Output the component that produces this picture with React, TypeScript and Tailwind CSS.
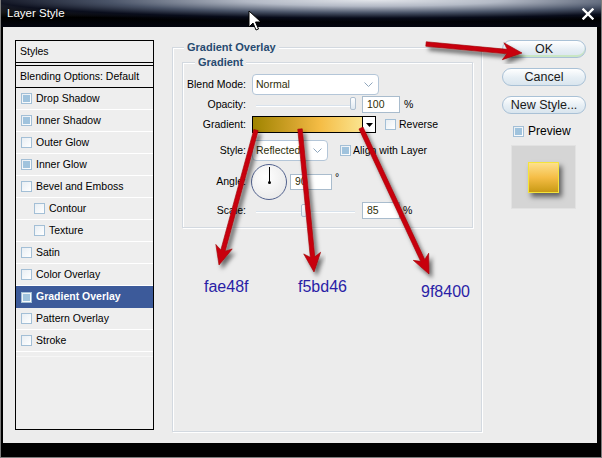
import React from "react";

type Row = { label: string; checked?: boolean; indent?: boolean; selected?: boolean };

const rows: Row[] = [
  { label: "Drop Shadow", checked: true },
  { label: "Inner Shadow", checked: true },
  { label: "Outer Glow" },
  { label: "Inner Glow", checked: true },
  { label: "Bevel and Emboss" },
  { label: "Contour", indent: true },
  { label: "Texture", indent: true },
  { label: "Satin" },
  { label: "Color Overlay" },
  { label: "Gradient Overlay", checked: true, selected: true },
  { label: "Pattern Overlay" },
  { label: "Stroke" },
];

function Check({ checked }: { checked?: boolean }) {
  return (
    <span className="w-[11px] h-[11px] border border-[#a3bfd6] bg-[linear-gradient(135deg,#e8eef3,#ffffff)] flex items-center justify-center shrink-0">
      {checked && <span className="w-[7px] h-[7px] bg-[#a0c3dd]" />}
    </span>
  );
}

function Chevron() {
  return (
    <svg width="9" height="6" viewBox="0 0 9 6">
      <polyline points="0.5,0.5 4.5,4.5 8.5,0.5" fill="none" stroke="#90a6bc" strokeWidth="1" />
    </svg>
  );
}

function arrowPts(x1: number, y1: number, x2: number, y2: number, w = 4.5, hl = 19, hw = 17) {
  const dx = x2 - x1;
  const dy = y2 - y1;
  const L = Math.hypot(dx, dy);
  const ux = dx / L;
  const uy = dy / L;
  const px = -uy;
  const py = ux;
  const bx = x2 - ux * hl;
  const by = y2 - uy * hl;
  const nx = x2 - ux * (hl - 4);
  const ny = y2 - uy * (hl - 4);
  const pts = [
    [x1 + (px * w) / 2, y1 + (py * w) / 2],
    [nx + (px * w) / 2, ny + (py * w) / 2],
    [bx + (px * hw) / 2, by + (py * hw) / 2],
    [x2, y2],
    [bx - (px * hw) / 2, by - (py * hw) / 2],
    [nx - (px * w) / 2, ny - (py * w) / 2],
    [x1 - (px * w) / 2, y1 - (py * w) / 2],
  ];
  return pts.map((p) => p.join(",")).join(" ");
}

const arrows: [number, number, number, number][] = [
  [425, 44, 521, 53],
  [255, 130, 218, 265],
  [299, 129, 313, 272],
  [360, 128, 428, 274],
];

export default function App() {
  return (
    <div className="w-[602px] h-[458px] bg-black relative overflow-hidden border-x border-b border-[#7c7c7c] font-['Liberation_Sans',Arial,sans-serif] text-[10.5px] text-black">
      {/* title bar */}
      <div className="h-[27px] flex items-center justify-between pl-[6px] pr-[7px] bg-[image:radial-gradient(ellipse_460px_22px_at_62%_0%,#e2e5ea_0%,#b4bac6_28%,#4a5468_58%,rgba(8,12,28,0.9)_82%,rgba(0,0,0,0)_100%),linear-gradient(to_bottom,#9a9a9a_0%,#2a2a2a_30%,#000_65%,#03050f_100%)]">
        <span className="text-white text-[11.5px] [text-shadow:0_0_2px_#000]">Layer Style</span>
        <svg width="12" height="12" viewBox="0 0 12 12">
          <path d="M1.5 1.5 L10.5 10.5 M10.5 1.5 L1.5 10.5" stroke="#fff" strokeWidth="2.4" strokeLinecap="square" />
        </svg>
      </div>

      {/* body */}
      <div className="h-[416px] ml-[2px] mr-[4px] bg-[#ececec] flex items-start pt-[13px] pl-[12px]">
        {/* styles list */}
        <div className="w-[139px] h-[390px] border border-black bg-[#eeeeee] flex flex-col">
          <div className="h-[22px] border-b border-black flex items-center pl-[4px]">Styles</div>
          <div className="mt-[2px] h-[23px] border-y border-black flex items-center pl-[4px]">Blending Options: Default</div>
          {rows.map((r) => (
            <div
              key={r.label}
              className={
                "h-[22px] flex items-center gap-[4px] " +
                (r.indent ? "pl-[18px] " : "pl-[5px] ") +
                (r.selected ? "bg-[#3c5a9a] text-white font-bold" : "border-b border-white")
              }
            >
              <Check checked={r.checked} />
              <span>{r.label}</span>
            </div>
          ))}
          <div className="h-[5px] border-b border-[#f6f6f6]" />
        </div>

        {/* main group */}
        <div className="relative ml-[18px] mt-[7px] w-[310px] h-[385px] border border-[#d3d9e0] shadow-[1px_1px_0_#ffffff,inset_1px_1px_0_#ffffff]">
          <span className="absolute -top-[8px] left-[11px] px-[3px] bg-[#ececec] leading-[14px] font-bold text-[11px] text-[#274a70]">
            Gradient Overlay
          </span>

          <div className="relative ml-[9px] mt-[14px] w-[291px] h-[166px] border border-[#d3d9e0] shadow-[1px_1px_0_#ffffff,inset_1px_1px_0_#ffffff] pt-[11px] flex flex-col">
            <span className="absolute -top-[8px] left-[12px] px-[3px] bg-[#ececec] leading-[14px] font-bold text-[11px] text-[#274a70]">
              Gradient
            </span>

            {/* Blend mode */}
            <div className="h-[21px] flex items-center">
              <span className="w-[63px] text-right">Blend Mode:</span>
              <div className="ml-[6px] w-[127px] h-[21px] rounded-[4px] border border-[#b4c6d8] bg-white flex items-center justify-between pl-[3px] pr-[5px] text-[#2e2e08]">
                <span>Normal</span>
                <Chevron />
              </div>
            </div>

            {/* Opacity */}
            <div className="mt-[1px] h-[17px] flex items-center">
              <span className="w-[63px] text-right">Opacity:</span>
              <div className="relative ml-[6px] w-[104px] h-[17px]">
                <div className="absolute left-[4px] right-[1px] top-[9px] h-[2px] bg-[#d8e2ec] border-b border-white" />
                <div className="absolute left-[98px] top-[1px] w-[6px] h-[13px] rounded-[2px] border border-[#aebfd0] bg-[linear-gradient(to_bottom,#ffffff,#dfe8f0)]" />
              </div>
              <div className="ml-[6px] w-[38px] h-[17px] border border-[#a9bccd] bg-white flex items-center pl-[4px] text-[#2e2e08]">100</div>
              <span className="ml-[4px]">%</span>
            </div>

            {/* Gradient */}
            <div className="mt-[3px] h-[17px] flex items-center">
              <span className="w-[63px] text-right">Gradient:</span>
              <div className="ml-[6px] w-[111px] h-[17px] border border-black bg-[linear-gradient(to_right,#9f8400,#d7a52e_40%,#f5bd46_62%,#fae48f)]" />
              <div className="w-[13px] h-[17px] border border-l-0 border-black bg-white flex items-center justify-center">
                <svg width="7" height="4" viewBox="0 0 7 4">
                  <polygon points="0,0 7,0 3.5,4" fill="#000" />
                </svg>
              </div>
              <span className="ml-[9px]">
                <Check checked={false} />
              </span>
              <span className="ml-[3px]">Reverse</span>
            </div>

            {/* Style */}
            <div className="mt-[7px] h-[21px] flex items-center">
              <span className="w-[63px] text-right">Style:</span>
              <div className="ml-[6px] w-[76px] h-[21px] rounded-[4px] border border-[#b4c6d8] bg-white flex items-center justify-between pl-[3px] pr-[5px] text-[#2e2e08]">
                <span>Reflected</span>
                <Chevron />
              </div>
              <span className="ml-[12px]">
                <Check checked />
              </span>
              <span className="ml-[2px]">Align with Layer</span>
            </div>

            {/* Angle */}
            <div className="mt-[3px] h-[36px] flex items-center">
              <span className="w-[63px] text-right">Angle:</span>
              <div className="relative ml-[5px] w-[36px] h-[36px] rounded-full border-[1.5px] border-[#52628e] bg-[radial-gradient(circle_at_40%_35%,#ffffff,#e4e4e4)]">
                <div className="absolute left-[16.5px] top-[2px] w-[1px] h-[15px] bg-black" />
                <div className="absolute left-[15.5px] top-[15.5px] w-[3px] h-[3px] rounded-full bg-black" />
              </div>
              <div className="ml-[3px] w-[42px] h-[16px] border border-[#a9bccd] bg-white flex items-center pl-[4px] text-[#2e2e08]">90</div>
              <span className="ml-[3px] self-start mt-[6px]">°</span>
            </div>

            {/* Scale */}
            <div className="mt-[2px] h-[17px] flex items-center">
              <span className="w-[63px] text-right">Scale:</span>
              <div className="relative ml-[6px] w-[104px] h-[17px]">
                <div className="absolute left-[4px] right-[1px] top-[9px] h-[2px] bg-[#d8e2ec] border-b border-white" />
                <div className="absolute left-[49px] top-[2px] w-[6px] h-[13px] rounded-[2px] border border-[#aebfd0] bg-[linear-gradient(to_bottom,#ffffff,#dfe8f0)]" />
              </div>
              <div className="ml-[6px] w-[38px] h-[17px] border border-[#a9bccd] bg-white flex items-center pl-[4px] text-[#2e2e08]">85</div>
              <span className="ml-[3px]">%</span>
            </div>
          </div>
        </div>

        {/* right column */}
        <div className="ml-[20px] w-[84px] flex flex-col">
          <div className="h-[18px] rounded-[9px] border border-[#a9c1d6] bg-[linear-gradient(to_bottom,#ffffff,#e6eef4_55%,#d9e5ee)] shadow-[inset_0_-2px_0_#c9e6c4] flex items-center justify-center text-[12.5px] text-[#1a1a1a]">
            OK
          </div>
          <div className="mt-[10px] h-[18px] rounded-[9px] border border-[#a9c1d6] bg-[linear-gradient(to_bottom,#ffffff,#e6eef4_55%,#d9e5ee)] flex items-center justify-center text-[12.5px] text-[#1a1a1a]">
            Cancel
          </div>
          <div className="mt-[10px] h-[18px] rounded-[9px] border border-[#a9c1d6] bg-[linear-gradient(to_bottom,#ffffff,#e6eef4_55%,#d9e5ee)] flex items-center justify-center text-[12.5px] text-[#1a1a1a]">
            New Style...
          </div>
          <div className="mt-[11px] h-[12px] flex items-center pl-[11px]">
            <Check checked />
            <span className="ml-[4px] text-[12px]">Preview</span>
          </div>
          <div className="mt-[8px] ml-[9px] w-[65px] h-[64px] bg-[#d5d5d5] border border-[#e2e2e2] flex items-center justify-center">
            <div className="w-[31px] h-[31px] border border-[#f4e43a] bg-[linear-gradient(to_bottom,#fde08c,#f5bd46_50%,#c99a14)] shadow-[3px_4px_5px_rgba(0,0,0,0.55)]" />
          </div>
        </div>
      </div>

      {/* annotations */}
      <svg className="absolute left-0 top-0 pointer-events-none" width="602" height="458" viewBox="0 0 602 458">
        <defs>
          <filter id="sh" x="-20%" y="-20%" width="140%" height="140%">
            <feDropShadow dx="3" dy="4" stdDeviation="2" floodColor="#000" floodOpacity="0.55" />
          </filter>
        </defs>
        {arrows.map((a, i) => (
          <polygon key={i} points={arrowPts(a[0], a[1], a[2], a[3])} fill="#c8060c" stroke="#a00006" strokeWidth="0.6" filter="url(#sh)" />
        ))}
        <path d="M248 11 L248 27 L252 23 L255 30 L257.5 29 L254.5 22 L260 22 Z" fill="#fff" stroke="#000" strokeWidth="1" strokeLinejoin="round" />
      </svg>
      <span className="absolute left-[203px] top-[278px] text-[16px] leading-[18px] text-[#2a1ea6]">fae48f</span>
      <span className="absolute left-[297px] top-[278px] text-[16px] leading-[18px] text-[#2a1ea6]">f5bd46</span>
      <span className="absolute left-[420px] top-[283px] text-[16px] leading-[18px] text-[#2a1ea6]">9f8400</span>
    </div>
  );
}
